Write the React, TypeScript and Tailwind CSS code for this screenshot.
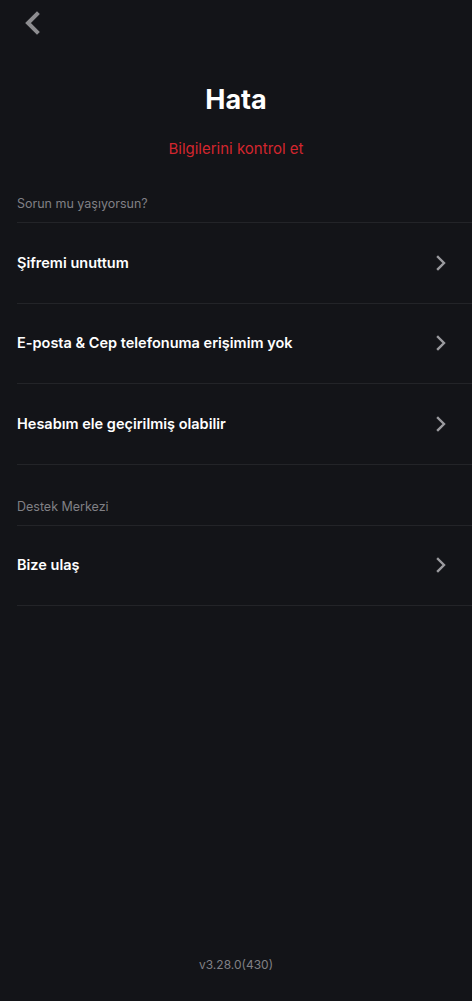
import React from "react";

const font = { fontFamily: "Inter, 'Noto Sans', sans-serif" };

function ChevronRight() {
  return (
    <svg width="10" height="16" viewBox="0 0 10 16" fill="none" aria-hidden="true">
      <path d="M2 2l6 6-6 6" stroke="#9b9b9f" strokeWidth="2.4" strokeLinecap="square" strokeLinejoin="miter" />
    </svg>
  );
}

function Row({ label }: { label: string }) {
  return (
    <div className="flex h-[80.5px] items-center justify-between border-t border-[#232428] pr-[26px]">
      <span className="text-[14.5px] font-semibold text-white">{label}</span>
      <ChevronRight />
    </div>
  );
}

function Section({ title, items }: { title: string; items: string[] }) {
  return (
    <div>
      <div className="pb-[9px] text-[12.5px] leading-[18px] text-[#808085]">{title}</div>
      <div className="border-b border-[#232428]">
        {items.map((item) => (
          <Row key={item} label={item} />
        ))}
      </div>
    </div>
  );
}

export default function App() {
  return (
    <div className="flex min-h-screen flex-col bg-[#131418]" style={font}>
      <div className="flex h-[46px] items-center pl-[24px]">
        <svg width="18" height="24" viewBox="0 0 18 24" fill="none" aria-hidden="true">
          <path d="M13 3L4 12l9 9" stroke="#8d8d90" strokeWidth="4" strokeLinecap="square" />
        </svg>
      </div>

      <h1 className="mt-[38px] text-center text-[27px] font-bold leading-[32px] text-white">Hata</h1>
      <p className="mt-[23px] text-center text-[15px] leading-[20px] text-[#d3262e]">Bilgilerini kontrol et</p>

      <div className="mt-[36px] pl-[17px]">
        <Section
          title="Sorun mu yaşıyorsun?"
          items={["Şifremi unuttum", "E-posta & Cep telefonuma erişimim yok", "Hesabım ele geçirilmiş olabilir"]}
        />
        <div className="pt-[33px]">
          <Section title="Destek Merkezi" items={["Bize ulaş"]} />
        </div>
      </div>

      <div className="mt-auto pb-[27px] text-center text-[12px] leading-[18px] text-[#808085]">v3.28.0(430)</div>
    </div>
  );
}
